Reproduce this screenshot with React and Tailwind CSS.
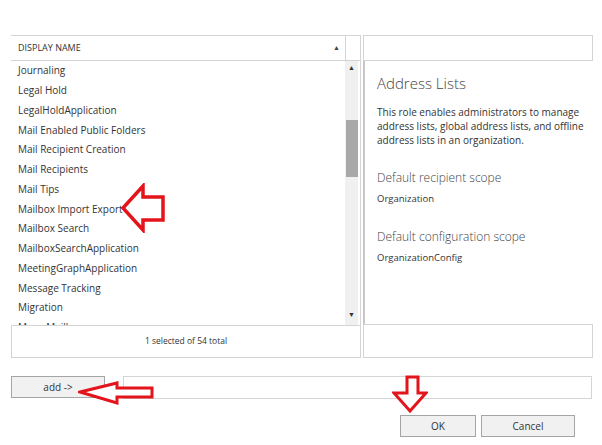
import React from "react";

const items = [
  "Journaling",
  "Legal Hold",
  "LegalHoldApplication",
  "Mail Enabled Public Folders",
  "Mail Recipient Creation",
  "Mail Recipients",
  "Mail Tips",
  "Mailbox Import Export",
  "Mailbox Search",
  "MailboxSearchApplication",
  "MeetingGraphApplication",
  "Message Tracking",
  "Migration",
  "Move Mailboxes",
];

function LeftArrow() {
  return (
    <svg className="absolute left-[120px] top-[183px]" width="48" height="50" viewBox="0 0 48 50">
      <path d="M3 25 L23 3 L23 14 L43 14 L43 37 L23 37 L23 47 Z" fill="white" stroke="#e3141b" strokeWidth="3.5" strokeLinejoin="miter" />
    </svg>
  );
}

function SmallLeftArrow() {
  return (
    <svg className="absolute left-[78px] top-[380px]" width="78" height="26" viewBox="0 0 78 26">
      <path d="M2 12 L39 3 L39 8 L74 8 L74 17 L39 17 L39 23 Z" fill="white" stroke="#e3141b" strokeWidth="3" />
    </svg>
  );
}

function DownArrow() {
  return (
    <svg className="absolute left-[392px] top-[375px]" width="36" height="39" viewBox="0 0 36 39">
      <path d="M15 2 L26 2 L26 18 L34 18 L18 36 L2 18 L15 18 Z" fill="white" stroke="#e3141b" strokeWidth="3" />
    </svg>
  );
}

export default function App() {
  return (
    <div
      className="relative w-[602px] h-[445px] bg-white text-[#333] overflow-hidden"
      style={{ fontFamily: '"Open Sans", "Noto Sans", sans-serif' }}
    >
      <div className="flex pt-[35px] pl-[11px] gap-[2px]">
        {/* Left column */}
        <div className="w-[350px] flex flex-col">
          <div className="flex h-[26px] border-t border-b border-[#d4d4d4]">
            <div className="flex-1 flex items-center justify-between pl-[7px] pr-[5px] border-r border-[#d4d4d4]">
              <span className="text-[9px] text-[#333]">DISPLAY NAME</span>
              <span className="text-[7px] text-[#444]">▲</span>
            </div>
            <div className="w-[15px] border-r border-[#d4d4d4]" />
          </div>
          <div className="flex h-[264px] border-r border-[#d4d4d4]">
            <div className="flex-1 overflow-hidden pl-[7px]">
              {items.map((t) => (
                <div key={t} className="h-[19.75px] flex items-center text-[10px] text-[#333] whitespace-nowrap">
                  {t}
                </div>
              ))}
            </div>
            <div className="w-[13px] bg-[#f0f0f0] flex flex-col items-center">
              <div className="h-[15px] flex items-center text-[7px] text-[#333]">▲</div>
              <div className="mt-[44px] w-[12px] h-[57px] bg-[#a9a9a9]" />
              <div className="flex-1" />
              <div className="h-[15px] flex items-center text-[7px] text-[#333] mb-[2px]">▼</div>
            </div>
            <div className="w-[2px]" />
          </div>
          <div className="h-[33px] border border-[#d4d4d4] flex items-center justify-center text-[8.5px] text-[#333]">
            1 selected of 54 total
          </div>
        </div>
        {/* Right column */}
        <div className="w-[230px] flex flex-col">
          <div className="h-[26px] border border-[#d4d4d4]" />
          <div className="h-[263px] border-l-2 border-[#c8c8c8] pl-[12px] pt-[12px]">
            <div className="text-[15px] font-light text-[#444] leading-[20px]">Address Lists</div>
            <div className="mt-[12px] text-[10px] leading-[14px] text-[#333] pr-[2px]">
              This role enables administrators to manage address lists, global address lists, and offline address lists in an organization.
            </div>
            <div className="mt-[22px] text-[12px] font-light text-[#444] leading-[18px]">Default recipient scope</div>
            <div className="mt-[5px] text-[9.5px] text-[#333] leading-[14px]">Organization</div>
            <div className="mt-[22px] text-[12px] font-light text-[#444] leading-[18px]">Default configuration scope</div>
            <div className="mt-[5px] text-[9.5px] text-[#333] leading-[14px]">OrganizationConfig</div>
          </div>
          <div className="h-[34px] border border-[#d4d4d4]" />
        </div>
      </div>

      <div className="flex items-start pl-[11px] mt-[18px] gap-[18px]">
        <div className="w-[94px] h-[22px] bg-[#f1f1f1] border border-[#a5a5a5] flex items-center justify-center text-[10px] text-[#333]">
          add -&gt;
        </div>
        <div className="w-[469px] h-[23px] border border-[#d4d4d4]" />
      </div>

      <div className="flex justify-end pr-[27px] mt-[16px] gap-[5px]">
        <div className="w-[76px] h-[22px] bg-[#f1f1f1] border border-[#a5a5a5] flex items-center justify-center text-[10px] text-[#333]">
          OK
        </div>
        <div className="w-[94px] h-[22px] bg-[#f1f1f1] border border-[#a5a5a5] flex items-center justify-center text-[10px] text-[#333]">
          Cancel
        </div>
      </div>

      <LeftArrow />
      <SmallLeftArrow />
      <DownArrow />
    </div>
  );
}
